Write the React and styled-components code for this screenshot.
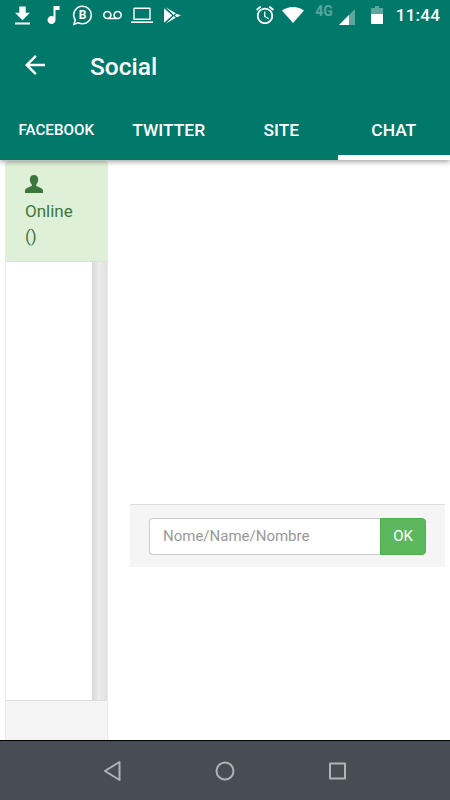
import React from "react";
import styled, { createGlobalStyle } from "styled-components";

const GlobalStyle = createGlobalStyle`
  html, body {
    margin: 0;
    padding: 0;
    background: #fff;
    font-family: Roboto, "Liberation Sans", sans-serif;
  }
`;

const Screen = styled.div`
  width: 450px;
  height: 800px;
  display: flex;
  flex-direction: column;
  overflow: hidden;
  background: #fff;
`;

const Header = styled.header`
  position: relative;
  z-index: 1;
  height: 160px;
  flex: none;
  background: #00796b;
  color: #fff;
  box-shadow: 0 2px 5px rgba(0, 0, 0, 0.35);
`;

const StatusBar = styled.div`
  height: 30px;
  display: flex;
  align-items: center;
  padding: 0 10px 0 15px;
`;

const Spacer = styled.div`
  flex: 1;
`;

const Glyph = styled.svg`
  flex: none;
  width: ${(p) => p.$w}px;
  height: ${(p) => p.$h}px;
  margin-left: ${(p) => p.$gap || 0}px;
  margin-top: ${(p) => p.$drop || 0}px;
  fill: #fff;
`;

const FourG = styled.span`
  align-self: flex-start;
  margin: 5px 0 0 11px;
  font-size: 14px;
  line-height: 12px;
  font-weight: 700;
  color: rgba(255, 255, 255, 0.35);
`;

const Clock = styled.span`
  margin-left: 13px;
  font-size: 17px;
  font-weight: 500;
  letter-spacing: 0.2px;
`;

const Toolbar = styled.div`
  height: 70px;
  display: flex;
  align-items: center;
  padding-left: 25px;
`;

const Title = styled.h1`
  margin: 2px 0 0 45px;
  font-size: 24.5px;
  font-weight: 500;
`;

const Tabs = styled.nav`
  height: 60px;
  display: grid;
  grid-template-columns: repeat(4, 1fr);
`;

const Tab = styled.div`
  display: flex;
  align-items: center;
  justify-content: center;
  font-size: ${(p) => p.$size || 17.4}px;
  font-weight: 500;
  box-shadow: ${(p) => (p.$active ? "inset 0 -5px 0 #fff" : "none")};
`;

const Body = styled.main`
  flex: 1;
  min-height: 0;
  display: flex;
  padding: 1px 5px 0;
`;

const Sidebar = styled.aside`
  width: 103px;
  flex: none;
  display: flex;
  flex-direction: column;
  box-sizing: border-box;
  border: 1px solid #e4efdc;
  border-bottom: 0;
  border-radius: 4px 4px 0 0;
`;

const SidebarHead = styled.div`
  height: 100px;
  flex: none;
  box-sizing: border-box;
  padding: 13px 0 0 19px;
  background: #dff0d8;
  border-bottom: 1px solid #d6e9c6;
  color: #3c763d;
  font-size: 17px;
  line-height: 25px;
`;

const UserIcon = styled.svg`
  display: block;
  width: 18px;
  height: 18px;
  margin-bottom: 6px;
  fill: #3c763d;
`;

const SidebarList = styled.div`
  flex: 1;
  display: flex;
  justify-content: flex-end;
`;

const Scrollbar = styled.div`
  width: 15px;
  background: linear-gradient(to right, #d8d8d8, #ececec 45%, #e0e0e0);
`;

const SidebarFoot = styled.div`
  height: 39px;
  flex: none;
  background: #f5f5f5;
  border-top: 1px solid #dddddd;
`;

const ChatPane = styled.section`
  flex: 1;
  display: flex;
  flex-direction: column;
  justify-content: flex-end;
  padding: 0 0 173px 22px;
`;

const NameBar = styled.form`
  height: 63px;
  box-sizing: border-box;
  display: flex;
  align-items: center;
  padding-left: 19px;
  background: #f5f5f5;
  border-top: 1px solid #dddddd;
`;

const NameInput = styled.input`
  width: 231px;
  height: 37px;
  box-sizing: border-box;
  padding: 0 13px;
  border: 1px solid #cccccc;
  border-right: 0;
  border-radius: 4px 0 0 4px;
  background: #fff;
  font-family: inherit;
  font-size: 15px;
  outline: none;

  &::placeholder {
    color: #999999;
    opacity: 1;
  }
`;

const OkButton = styled.button`
  width: 46px;
  height: 37px;
  border: 1px solid #4cae4c;
  border-radius: 0 4px 4px 0;
  background: #5cb85c;
  color: #fff;
  font-family: inherit;
  font-size: 15px;
  padding: 0;
`;

const NavBar = styled.footer`
  height: 60px;
  flex: none;
  box-sizing: border-box;
  display: flex;
  align-items: center;
  padding-left: 103px;
  background: #474d55;
  border-top: 1px solid #000;
`;

const NavIcon = styled.svg`
  flex: none;
  width: ${(p) => p.$w}px;
  height: 22px;
  margin-left: ${(p) => p.$gap || 0}px;
  fill: none;
  stroke: #aeb3b7;
  stroke-width: 2;
  stroke-linejoin: round;
`;

function StatusIcons() {
  return (
    <StatusBar>
      {/* download */}
      <Glyph $w={15} $h={19} viewBox="5 3 14 17">
        <path d="M19 9h-4V3H9v6H5l7 7 7-7zM5 18v2h14v-2H5z" />
      </Glyph>
      {/* music note */}
      <Glyph $w={14} $h={18} $gap={16} viewBox="5 3 13 18">
        <path d="M12 3v10.55c-.59-.34-1.27-.55-2-.55-2.21 0-4 1.79-4 4s1.79 4 4 4 4-1.79 4-4V7h4V3h-6z" />
      </Glyph>
      {/* business bubble */}
      <Glyph $w={21} $h={21} $gap={12} viewBox="0 0 21 21">
        <path
          d="M10.5 1.2a8.8 8.8 0 0 1 0 17.6c-1.5 0-2.9-.4-4.2-1l-4.3 1.4 1.3-4.2a8.8 8.8 0 0 1 7.2-13.8z"
          fill="none"
          stroke="#fff"
          strokeWidth="1.6"
        />
        <text x="10.5" y="14.4" fontSize="12" fontWeight="700" textAnchor="middle" fontFamily="Roboto">
          B
        </text>
      </Glyph>
      {/* voicemail */}
      <Glyph $w={19} $h={10} $gap={10} viewBox="0 6 24 11">
        <path d="M18.5 6C15.46 6 13 8.46 13 11.5c0 1.33.47 2.55 1.26 3.5H9.74c.79-.95 1.26-2.17 1.26-3.5C11 8.46 8.54 6 5.5 6S0 8.46 0 11.5 2.46 17 5.5 17h13c3.04 0 5.5-2.46 5.5-5.5S21.54 6 18.5 6zm-13 9C3.57 15 2 13.43 2 11.5S3.57 8 5.5 8 9 9.57 9 11.5 7.43 15 5.5 15zm13 0c-1.93 0-3.5-1.57-3.5-3.5S16.57 8 18.5 8 22 9.57 22 11.5 20.43 15 18.5 15z" />
      </Glyph>
      {/* laptop */}
      <Glyph $w={22} $h={16} $gap={9} viewBox="0 0 22 16">
        <path d="M3.6 1.2h14.8a.6.6 0 0 1 .6.6v10.4H3V1.8a.6.6 0 0 1 .6-.6z" fill="none" stroke="#fff" strokeWidth="1.4" />
        <rect x="0" y="14.4" width="22" height="1.6" />
      </Glyph>
      {/* play store */}
      <Glyph $w={17} $h={17} $gap={11} $drop={1} viewBox="0 0 17 17">
        <path d="M0 1.200L8.300 8.500L0 15.800z" />
        <path d="M1.600 0.300L11.800 6.200L9.800 8zM1.600 16.700L11.800 10.800L9.800 9z" />
        <path d="M12.800 6.700L17 8.500L12.800 10.300L10.900 8.500z" />
      </Glyph>
      <Spacer />
      {/* alarm */}
      <Glyph $w={18} $h={18} viewBox="2 2 20 20">
        <path d="M22 5.72l-4.6-3.86-1.29 1.53 4.6 3.86L22 5.72zM7.88 3.39L6.6 1.86 2 5.71l1.29 1.53 4.59-3.85zM12.5 8H11v6l4.75 2.85.75-1.23-4-2.37V8zM12 4c-4.97 0-9 4.03-9 9s4.03 9 9 9c4.97 0 9-4.03 9-9s-4.03-9-9-9zm0 16c-3.87 0-7-3.13-7-7s3.13-7 7-7 7 3.13 7 7-3.13 7-7 7z" />
      </Glyph>
      {/* wifi */}
      <Glyph $w={22} $h={16} $gap={8} viewBox="0 0 22 16">
        <path d="M11 16L0 3.6C3 1.3 6.8 0 11 0s8 1.3 11 3.6z" />
      </Glyph>
      <FourG>4G</FourG>
      {/* signal */}
      <Glyph $w={16} $h={16} $gap={6} $drop={3} viewBox="0 0 16 16">
        <path d="M16 0V16H0z" fillOpacity="0.35" />
        <path d="M10 6V16H0z" />
      </Glyph>
      {/* battery */}
      <Glyph $w={12} $h={18} $gap={16} viewBox="0 0 12 18">
        <path d="M4 0h4v2h4v16H0V2h4z" fillOpacity="0.35" />
        <path d="M0 8h12v10H0z" />
      </Glyph>
      <Clock>11:44</Clock>
    </StatusBar>
  );
}

export default function App() {
  return (
    <Screen>
      <GlobalStyle />
      <Header>
        <StatusIcons />
        <Toolbar>
          <Glyph $w={20} $h={20} viewBox="4 4 16 16">
            <path d="M20 11H7.83l5.59-5.59L12 4l-8 8 8 8 1.41-1.41L7.83 13H20v-2z" />
          </Glyph>
          <Title>Social</Title>
        </Toolbar>
        <Tabs>
          <Tab $size={15.2}>FACEBOOK</Tab>
          <Tab>TWITTER</Tab>
          <Tab>SITE</Tab>
          <Tab $active>CHAT</Tab>
        </Tabs>
      </Header>

      <Body>
        <Sidebar>
          <SidebarHead>
            <UserIcon viewBox="0 0 18 18">
              <path d="M9 0c2.6 0 4.2 1.9 4.2 4.6 0 2-.8 3.8-2 4.9v1.6c1.9.7 6.8 2.2 6.8 4.6V18H0v-2.300c0-2.400 4.900-3.900 6.800-4.600V9.500c-1.200-1.100-2-2.900-2-4.900C4.800 1.900 6.400 0 9 0z" />
            </UserIcon>
            Online
            <br />
            ()
          </SidebarHead>
          <SidebarList>
            <Scrollbar />
          </SidebarList>
          <SidebarFoot />
        </Sidebar>

        <ChatPane>
          <NameBar onSubmit={(e) => e.preventDefault()}>
            <NameInput placeholder="Nome/Name/Nombre" />
            <OkButton type="submit">OK</OkButton>
          </NameBar>
        </ChatPane>
      </Body>

      <NavBar>
        <NavIcon $w={18} viewBox="0 0 18 22">
          <path d="M16.500 2v18L2 11z" />
        </NavIcon>
        <NavIcon $w={20} $gap={94} viewBox="0 0 20 22">
          <circle cx="10" cy="11" r="8.500" />
        </NavIcon>
        <NavIcon $w={18} $gap={93} viewBox="0 0 18 22">
          <rect x="2" y="3.500" width="15" height="15" />
        </NavIcon>
      </NavBar>
    </Screen>
  );
}
